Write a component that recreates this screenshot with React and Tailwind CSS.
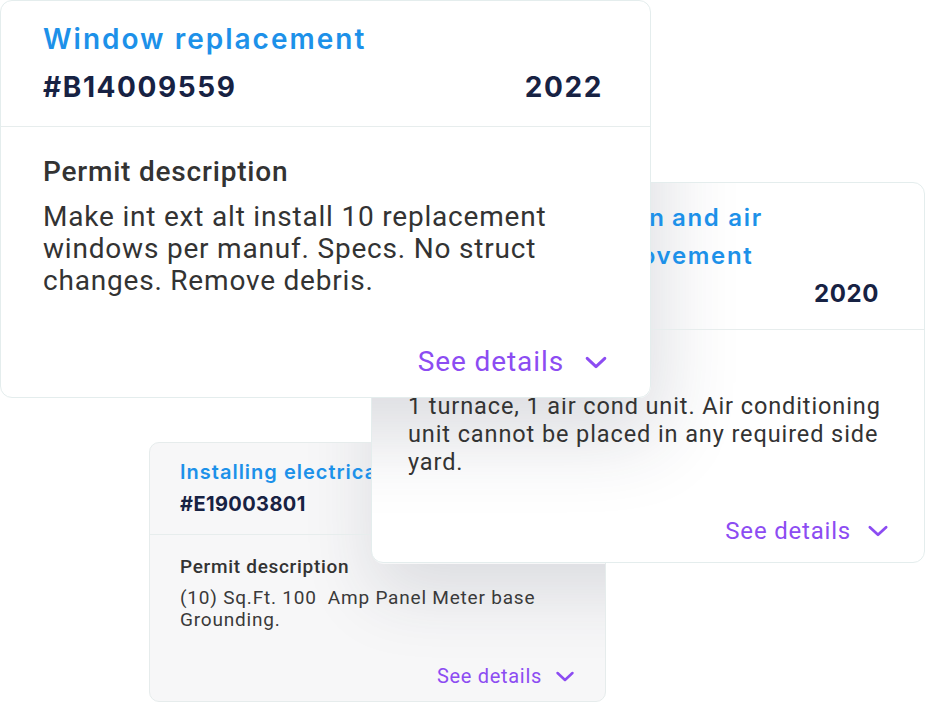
import React from 'react'

const head = "font-['Inter','Liberation_Sans',sans-serif]"
const body = "font-['Roboto','Liberation_Sans',sans-serif]"

function Chevron({ className }) {
  return (
    <svg viewBox="0 0 24 14" fill="none" className={className}>
      <polyline points="2.5,2.5 12,11.5 21.5,2.5" stroke="currentColor" strokeWidth="3.2" strokeLinecap="round" strokeLinejoin="round" />
    </svg>
  )
}

export default function App() {
  return (
    <div className={`relative h-[702px] w-[925px] overflow-hidden bg-white ${body}`}>
      {/* back card */}
      <div className="absolute left-[149px] top-[442px] z-10 flex h-[260px] w-[457px] flex-col overflow-hidden rounded-[10px] border border-[#e6ecec] bg-[#f7f7f8]">
        {/* shadow cast by the middle card */}
        <div className="absolute left-[222px] top-[-260px] -z-10 h-[381px] w-[554px] rounded-[12px] shadow-[0_30px_70px_rgba(40,45,70,0.13)]" />
        <div className="flex flex-col px-[30px] pt-[15px] pb-[16px]">
          <div className={`${head} text-[20px] font-semibold leading-[28px] tracking-[1px] text-[#1d91e9]`}>Installing electrical panel</div>
          <div className={`${head} mt-[4px] text-[20px] font-bold leading-[28px] tracking-[0.4px] text-[#172243]`}>#E19003801</div>
        </div>
        <div className="border-t border-[#e7eded]" />
        <div className="flex flex-1 flex-col px-[30px] pt-[20px]">
          <div className="text-[19px] font-medium leading-[24px] tracking-[0.7px] text-[#333]">Permit description</div>
          <div className="mt-[8px] text-[19px] leading-[22px] tracking-[0.8px] text-[#3a3a3a]">(10) Sq.Ft. 100&nbsp; Amp Panel Meter base Grounding.</div>
          <div className="mt-auto flex items-center justify-end gap-[13px] pb-[12px] text-[#8c4cf2]">
            <span className="text-[20px] leading-[26px] tracking-[0.7px]">See details</span>
            <Chevron className="h-[11px] w-[20px]" />
          </div>
        </div>
      </div>

      {/* middle card */}
      <div className="absolute left-[371px] top-[182px] z-20 flex h-[381px] w-[554px] flex-col overflow-hidden rounded-[12px] border border-[#e4eded] bg-white">
        {/* shadow cast by the front card */}
        <div className="absolute left-[-372px] top-[-183px] -z-10 h-[398px] w-[651px] rounded-[12px] shadow-[10px_40px_80px_rgba(40,45,70,0.16)]" />
        <div className="flex flex-col pl-[36px] pr-[45px] pt-[16px]">
          <div className={`${head} whitespace-nowrap text-[24px] font-semibold leading-[38px] tracking-[1.7px] text-[#1d91e9]`}>
            <div>
              <span className="inline-block w-[264px] overflow-hidden align-top">Heating installation</span>and air
            </div>
            <div>
              <span className="inline-block w-[174px] overflow-hidden align-top">conditioning</span>improvement
            </div>
          </div>
          <div className={`${head} flex items-center justify-between text-[24px] font-bold leading-[38px] tracking-[0.6px] text-[#172243]`}>
            <span>#B20011470</span>
            <span>2020</span>
          </div>
        </div>
        <div className="mt-[16px] border-t border-[#e7eded]" />
        <div className="flex flex-1 flex-col pl-[36px] pr-[30px] pt-[24px]">
          <div className="text-[23.5px] font-medium leading-[28px] tracking-[0.8px] text-[#333]">Permit description</div>
          <div className="mt-[10px] text-[23.5px] leading-[28px] tracking-[0.9px] text-[#333]">
            1 turnace, 1 air cond unit. Air conditioning unit cannot be placed in any required side yard.
          </div>
          <div className="mt-auto flex items-center justify-end gap-[16px] pb-[16px] pr-[5px] text-[#8c4cf2]">
            <span className="text-[24px] leading-[30px] tracking-[0.8px]">See details</span>
            <Chevron className="h-[12px] w-[22px]" />
          </div>
        </div>
      </div>

      {/* front card */}
      <div className="absolute left-0 top-0 z-30 flex h-[398px] w-[651px] flex-col rounded-[12px] border border-[#e4eded] bg-white">
        <div className="flex flex-col pl-[42px] pr-[47px] pt-[19px] pb-[20px]">
          <div className={`${head} text-[28px] font-semibold leading-[38px] tracking-[2px] text-[#1d91e9]`}>Window replacement</div>
          <div className={`${head} mt-[10px] flex items-center justify-between text-[28px] font-bold leading-[38px] tracking-[1.6px] text-[#172243]`}>
            <span>#B14009559</span>
            <span>2022</span>
          </div>
        </div>
        <div className="border-t border-[#e7eded]" />
        <div className="flex flex-1 flex-col pl-[42px] pr-[42px] pt-[29px]">
          <div className="text-[28px] font-medium leading-[32px] tracking-[0.8px] text-[#333]">Permit description</div>
          <div className="mt-[13px] text-[28px] leading-[32px] tracking-[0.8px] text-[#333]">
            Make int ext alt install 10 replacement windows per manuf. Specs. No struct changes. Remove debris.
          </div>
          <div className="mt-auto flex items-center justify-end gap-[20px] pb-[18px] text-[#8c4cf2]">
            <span className="text-[28px] leading-[34px] tracking-[0.9px]">See details</span>
            <Chevron className="h-[13px] w-[24px]" />
          </div>
        </div>
      </div>
    </div>
  )
}
